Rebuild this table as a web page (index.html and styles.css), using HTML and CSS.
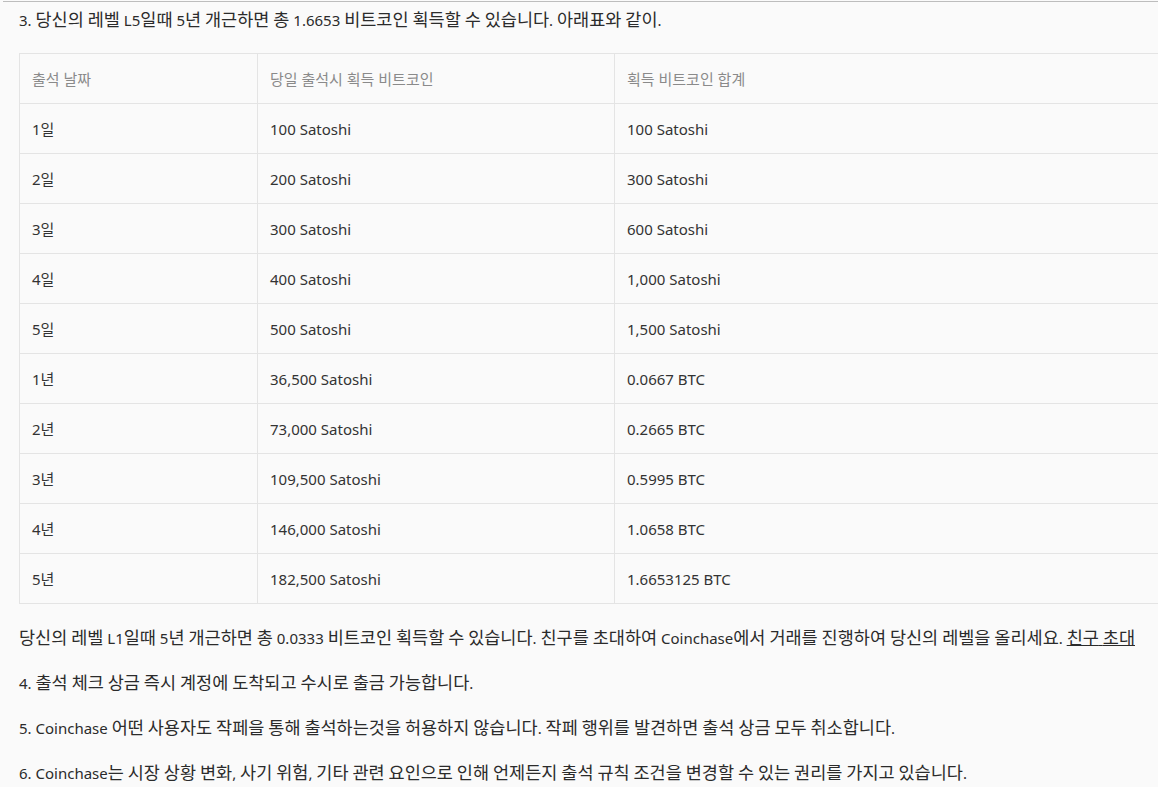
FILE: index.html
```html
<!DOCTYPE html>
<html lang="ko">
<head>
<meta charset="utf-8">
<link rel="stylesheet" href="styles.css">
</head>
<body>
<div class="page">
  <p class="para">3. 당신의 레벨 L5일때 5년 개근하면 총 1.6653 비트코인 획득할 수 있습니다. 아래표와 같이.</p>
  <table class="grid">
    <thead>
      <tr><th class="c1">출석 날짜</th><th class="c2">당일 출석시 획득 비트코인</th><th class="c3">획득 비트코인 합계</th></tr>
    </thead>
    <tbody>
      <tr><td>1일</td><td>100 Satoshi</td><td>100 Satoshi</td></tr>
      <tr><td>2일</td><td>200 Satoshi</td><td>300 Satoshi</td></tr>
      <tr><td>3일</td><td>300 Satoshi</td><td>600 Satoshi</td></tr>
      <tr><td>4일</td><td>400 Satoshi</td><td>1,000 Satoshi</td></tr>
      <tr><td>5일</td><td>500 Satoshi</td><td>1,500 Satoshi</td></tr>
      <tr><td>1년</td><td>36,500 Satoshi</td><td>0.0667 BTC</td></tr>
      <tr><td>2년</td><td>73,000 Satoshi</td><td>0.2665 BTC</td></tr>
      <tr><td>3년</td><td>109,500 Satoshi</td><td>0.5995 BTC</td></tr>
      <tr><td>4년</td><td>146,000 Satoshi</td><td>1.0658 BTC</td></tr>
      <tr><td>5년</td><td>182,500 Satoshi</td><td>1.6653125 BTC</td></tr>
    </tbody>
  </table>
  <p class="para after">당신의 레벨 L1일때 5년 개근하면 총 0.0333 비트코인 획득할 수 있습니다. 친구를 초대하여 Coinchase에서 거래를 진행하여 당신의 레벨을 올리세요. <a class="link" href="#">친구 초대</a></p>
  <p class="para">4. 출석 체크 상금 즉시 계정에 도착되고 수시로 출금 가능합니다.</p>
  <p class="para">5. Coinchase 어떤 사용자도 작페을 통해 출석하는것을 허용하지 않습니다. 작페 행위를 발견하면 출석 상금 모두 취소합니다.</p>
  <p class="para">6. Coinchase는 시장 상황 변화, 사기 위험, 기타 관련 요인으로 인해 언제든지 출석 규칙 조건을 변경할 수 있는 권리를 가지고 있습니다.</p>
</div>
<script src="app.js"></script>
</body>
</html>
```
FILE: styles.css
```css
html, body {
  margin: 0;
  padding: 0;
  background: #fafafa;
  overflow: hidden;
}
body {
  font-family: "Noto Sans", "Noto Sans CJK KR", sans-serif;
  font-size: 15px;
  color: #333;
}
.page {
  margin: 1px 0 0 3px;
  border-top: 1px solid #bdbdbd;
  padding: 6px 0 0 16px;
}
.para {
  margin: 0 0 21px 0;
  height: 24px;
  line-height: 24px;
  white-space: nowrap;
  color: #2b2b2b;
}
.ko {
  font-family: "Noto Sans CJK KR", sans-serif;
  font-size: 17.5px;
  line-height: 1;
}
.after {
  margin-top: 22px;
}
.grid {
  border-collapse: collapse;
  width: 1160px;
  table-layout: fixed;
}
.grid th, .grid td {
  border: 1px solid #e4e4e4;
  height: 50px;
  padding: 0 12px;
  text-align: left;
  font-weight: normal;
  box-sizing: border-box;
  line-height: 20px;
}
.grid th {
  color: #8a8a8a;
}
.grid td {
  color: #333;
}
.c1 { width: 238px; }
.c2 { width: 357px; }
.link {
  color: #2b2b2b;
  text-decoration: underline;
}
```
FILE: app.js
```js
document.querySelectorAll('.para').forEach(function (el) {
  var walker = document.createTreeWalker(el, NodeFilter.SHOW_TEXT);
  var nodes = [];
  while (walker.nextNode()) nodes.push(walker.currentNode);
  nodes.forEach(function (node) {
    var text = node.nodeValue;
    var re = /[\uAC00-\uD7A3]+/g;
    if (!re.test(text)) return;
    re.lastIndex = 0;
    var frag = document.createDocumentFragment();
    var last = 0, m;
    while ((m = re.exec(text))) {
      if (m.index > last) frag.appendChild(document.createTextNode(text.slice(last, m.index)));
      var span = document.createElement('span');
      span.className = 'ko';
      span.textContent = m[0];
      frag.appendChild(span);
      last = m.index + m[0].length;
    }
    if (last < text.length) frag.appendChild(document.createTextNode(text.slice(last)));
    node.parentNode.replaceChild(frag, node);
  });
});
```
